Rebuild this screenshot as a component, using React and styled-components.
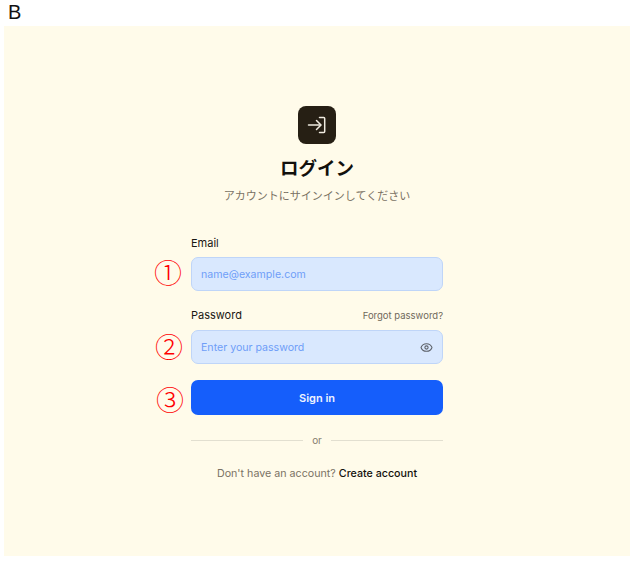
import React from "react";
import styled, { createGlobalStyle } from "styled-components";
import { Eye } from "lucide-react";

const GlobalStyle = createGlobalStyle`
  html, body { margin: 0; padding: 0; background: #fff; }
  body { font-family: Inter, "Noto Sans CJK JP", sans-serif; }
`;

const Page = styled.div`
  width: 631px;
  height: 562px;
  overflow: hidden;
`;

const VariantLabel = styled.div`
  height: 26px;
  padding-left: 8px;
  font-family: "Liberation Sans", sans-serif;
  font-size: 20px;
  line-height: 24px;
  color: #111;
`;

const Panel = styled.main`
  width: 626px;
  height: 530px;
  margin-left: 4px;
  padding-top: 80px;
  box-sizing: border-box;
  background: #fffbea;
  display: flex;
  flex-direction: column;
  align-items: center;
`;

const LogoBox = styled.div`
  width: 38px;
  height: 38px;
  border-radius: 8px;
  background: #261f14;
  color: #f0ebe0;
  display: flex;
  align-items: center;
  justify-content: center;
`;

const Title = styled.h1`
  margin: 12px 0 0;
  font-family: "Noto Sans CJK JP", sans-serif;
  font-size: 18.5px;
  line-height: 22px;
  font-weight: 700;
  color: #12100c;
`;

const Subtitle = styled.p`
  margin: 8px 0 0;
  font-family: "Noto Sans CJK JP", sans-serif;
  font-size: 11px;
  line-height: 18px;
  color: #7a7264;
`;

const Form = styled.form`
  width: 252px;
  margin-top: 32px;
  display: flex;
  flex-direction: column;
`;

const Field = styled.div`
  position: relative;
  margin-bottom: ${(p) => p.$gap}px;
`;

const LabelRow = styled.div`
  height: 14px;
  margin-bottom: ${(p) => p.$gap}px;
  display: flex;
  align-items: center;
  justify-content: space-between;
`;

const Label = styled.label`
  font-size: 11px;
  font-weight: 400;
  color: #1a1712;
`;

const ForgotLink = styled.a`
  font-size: 9.5px;
  color: #6f685b;
`;

const InputBox = styled.div`
  position: relative;
  height: 34px;
  box-sizing: border-box;
  padding: 0 9px;
  border: 1px solid #bfd5f8;
  border-radius: 7px;
  background: #d9e8fe;
  display: flex;
  align-items: center;
  justify-content: space-between;
`;

const Placeholder = styled.span`
  font-size: 10.6px;
  color: #6f9ef8;
`;

const EyeIcon = styled(Eye)`
  width: 13px;
  height: 13px;
  color: #5c6068;
`;

const Marker = styled.span`
  position: absolute;
  left: ${(p) => p.$left}px;
  top: ${(p) => p.$top}px;
  font-family: "Noto Sans CJK JP", sans-serif;
  font-size: 28px;
  font-weight: 300;
  line-height: 30px;
  color: #f00;
`;

const SubmitButton = styled.button`
  width: 100%;
  height: 35px;
  padding: 0;
  border: none;
  display: block;
  border-radius: 7px;
  background: #155efb;
  color: #eef3ff;
  font-family: inherit;
  font-size: 11px;
  font-weight: 600;
`;

const Divider = styled.div`
  margin-top: 17px;
  height: 16px;
  display: flex;
  align-items: center;
  gap: 9px;
  font-size: 10px;
  color: #857d6f;
  &::before, &::after {
    content: "";
    flex: 1;
    height: 1px;
    background: #e2dfd0;
  }
`;

const Footer = styled.p`
  margin: 18px 0 0;
  text-align: center;
  font-size: 10.7px;
  line-height: 16px;
  color: #7a7264;
`;

const CreateLink = styled.a`
  font-weight: 500;
  color: #14110c;
`;

export default function App() {
  return (
    <Page>
      <GlobalStyle />
      <VariantLabel>B</VariantLabel>
      <Panel>
        <LogoBox>
          <svg width="20" height="20" viewBox="0 0 20 20" fill="none" stroke="currentColor" strokeWidth="1.5" strokeLinecap="round" strokeLinejoin="round">
            <path d="M12.5 2.5h4.2a1 1 0 0 1 1 1v13a1 1 0 0 1-1 1h-4.2" />
            <path d="M9.5 5.5l4.5 4.5-4.5 4.5" />
            <path d="M13.5 10H1.5" />
          </svg>
        </LogoBox>
        <Title>ログイン</Title>
        <Subtitle>アカウントにサインインしてください</Subtitle>
        <Form>
          <Field $gap={17}>
            <LabelRow $gap={7}>
              <Label>Email</Label>
            </LabelRow>
            <InputBox>
              <Placeholder>name@example.com</Placeholder>
            </InputBox>
            <Marker $left={-37} $top={21}>①</Marker>
          </Field>
          <Field $gap={16}>
            <LabelRow $gap={8}>
              <Label>Password</Label>
              <ForgotLink>Forgot password?</ForgotLink>
            </LabelRow>
            <InputBox>
              <Placeholder>Enter your password</Placeholder>
              <EyeIcon />
            </InputBox>
            <Marker $left={-36} $top={23}>②</Marker>
          </Field>
          <Field $gap={0}>
            <SubmitButton type="button">Sign in</SubmitButton>
            <Marker $left={-35} $top={4}>③</Marker>
          </Field>
          <Divider>or</Divider>
          <Footer>
            Don't have an account? <CreateLink>Create account</CreateLink>
          </Footer>
        </Form>
      </Panel>
    </Page>
  );
}
